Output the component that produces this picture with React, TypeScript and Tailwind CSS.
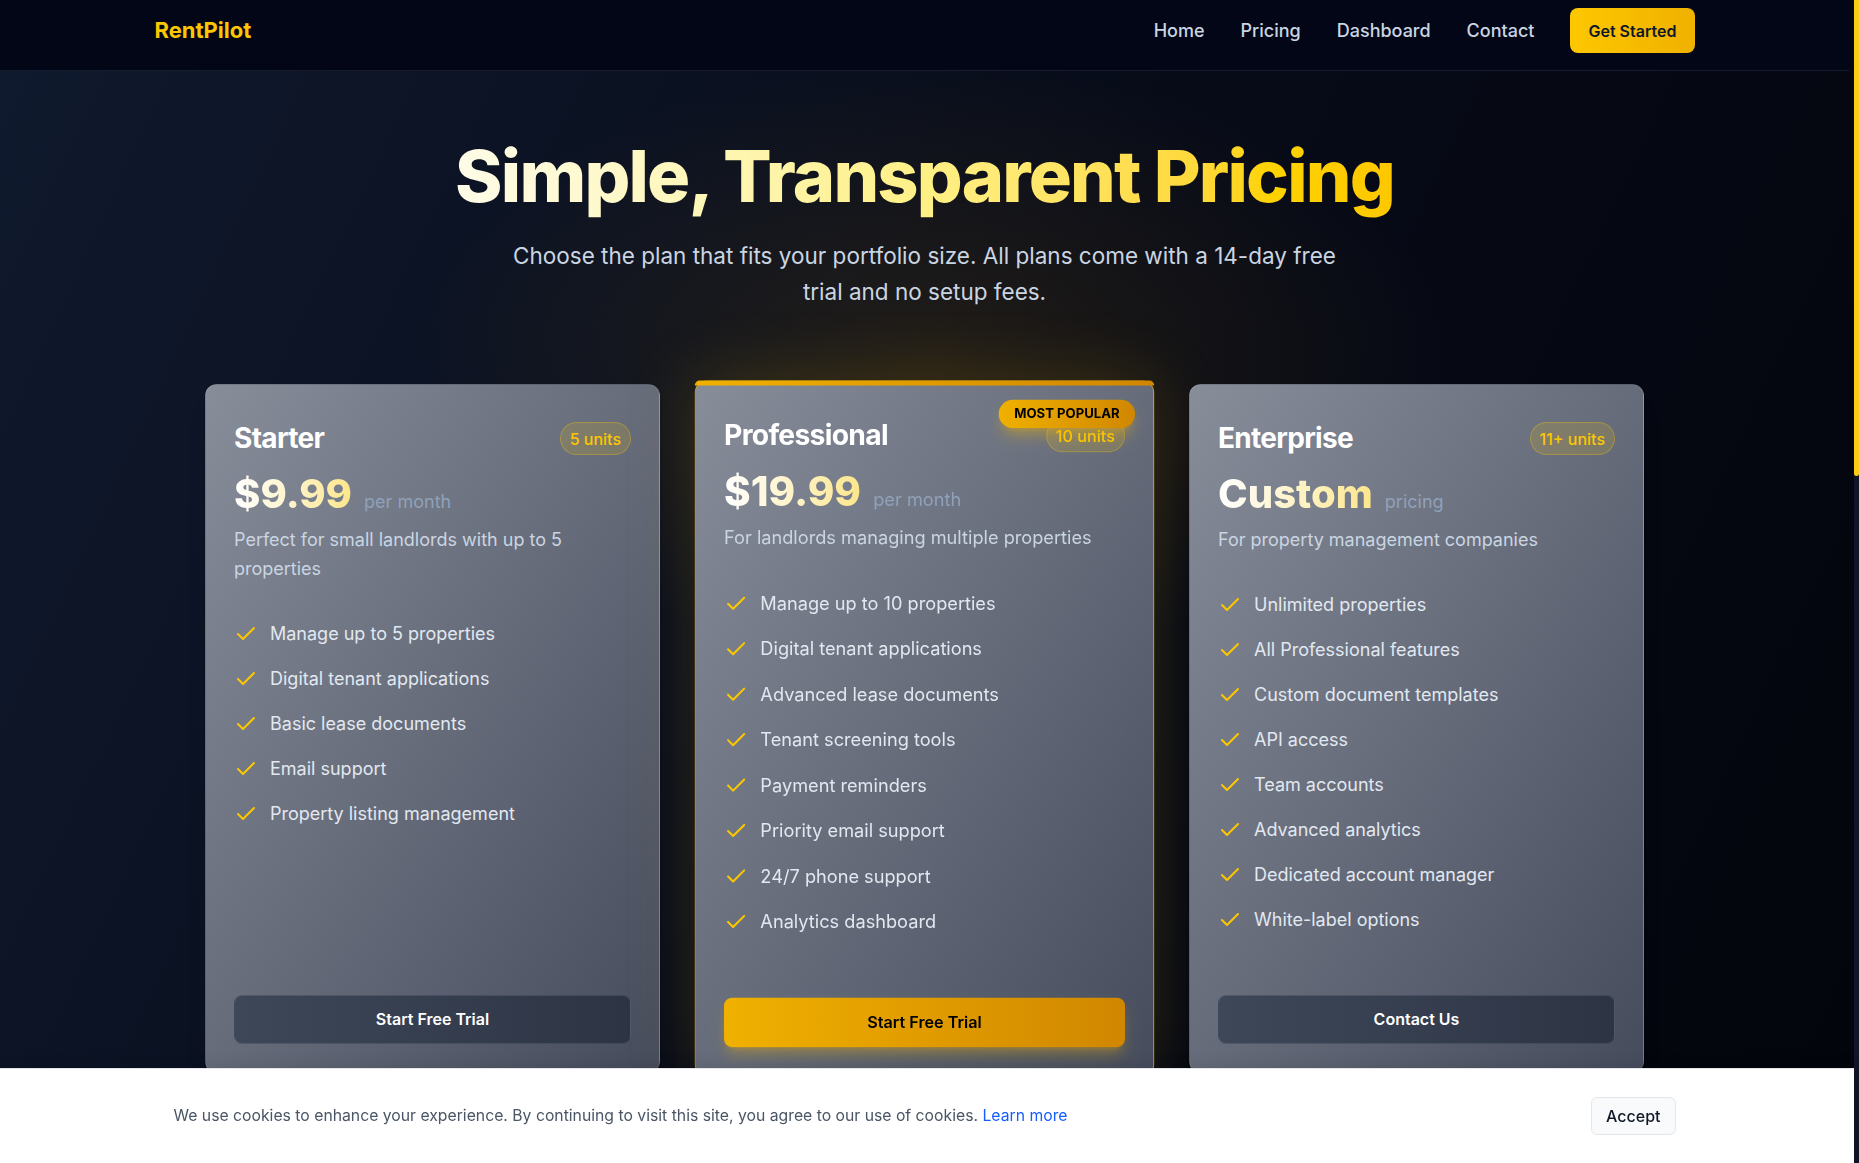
import { Check } from 'lucide-react'
import clsx from 'clsx'

type Plan = {
  name: string
  units: string
  price: string
  period: string
  description: string
  features: string[]
  cta: string
  popular?: boolean
}

const plans: Plan[] = [
  {
    name: 'Starter',
    units: '5 units',
    price: '$9.99',
    period: 'per month',
    description: 'Perfect for small landlords with up to 5 properties',
    features: [
      'Manage up to 5 properties',
      'Digital tenant applications',
      'Basic lease documents',
      'Email support',
      'Property listing management',
    ],
    cta: 'Start Free Trial',
  },
  {
    name: 'Professional',
    units: '10 units',
    price: '$19.99',
    period: 'per month',
    description: 'For landlords managing multiple properties',
    features: [
      'Manage up to 10 properties',
      'Digital tenant applications',
      'Advanced lease documents',
      'Tenant screening tools',
      'Payment reminders',
      'Priority email support',
      '24/7 phone support',
      'Analytics dashboard',
    ],
    cta: 'Start Free Trial',
    popular: true,
  },
  {
    name: 'Enterprise',
    units: '11+ units',
    price: 'Custom',
    period: 'pricing',
    description: 'For property management companies',
    features: [
      'Unlimited properties',
      'All Professional features',
      'Custom document templates',
      'API access',
      'Team accounts',
      'Advanced analytics',
      'Dedicated account manager',
      'White-label options',
    ],
    cta: 'Contact Us',
  },
]

const faqs = [
  'Can I change plans later?',
  'What happens after the free trial?',
  'Do you charge setup fees?',
  'Is my data secure?',
]

function PlanCard({ plan }: { plan: Plan }) {
  return (
    <div
      className={clsx(
        'relative flex flex-col rounded-xl border bg-gradient-to-br from-[#878d99] to-[#464c5c] px-7 pt-9 pb-7',
        plan.popular
          ? 'scale-[1.01] border-yellow-500/60 shadow-[0_0_70px_rgba(234,179,8,0.18)]'
          : 'border-white/10 shadow-xl'
      )}
    >
      {plan.popular && (
        <>
          <div className="absolute -inset-x-px -top-px h-[5px] rounded-t-xl bg-gradient-to-r from-yellow-500 to-yellow-600" />
          <span className="absolute top-[18px] right-[18px] z-10 flex h-7 w-[135px] items-center justify-center rounded-full bg-gradient-to-r from-yellow-500 to-yellow-600 text-[13px] font-bold text-black shadow-lg shadow-yellow-500/40">
            MOST POPULAR
          </span>
        </>
      )}

      <div className="flex items-center justify-between">
        <h3 className="text-[28px] leading-[35px] font-bold tracking-tight text-white">{plan.name}</h3>
        <span className="flex h-[33px] items-center rounded-full border border-yellow-400/30 bg-yellow-400/15 px-[9px] text-base font-medium text-yellow-400">
          {plan.units}
        </span>
      </div>

      <div className="mt-4 flex items-baseline gap-3">
        <span className="bg-gradient-to-r from-white to-[#fde68a] bg-clip-text text-[40px] leading-[44px] font-extrabold text-transparent">
          {plan.price}
        </span>
        <span className="text-lg text-slate-400">{plan.period}</span>
      </div>

      <p className="mt-2.5 text-lg leading-[1.6] text-slate-300">{plan.description}</p>

      <ul className="mt-9 flex flex-col gap-[17px]">
        {plan.features.map((f) => (
          <li key={f} className="flex items-center gap-3 text-lg leading-7 text-slate-200">
            <Check size={24} strokeWidth={2} className="shrink-0 text-yellow-400" />
            {f}
          </li>
        ))}
      </ul>

      <div className="mt-auto pt-[61px]">
        <button
          className={clsx(
            'h-[49px] w-full rounded-lg text-base font-semibold',
            plan.popular
              ? 'bg-gradient-to-r from-yellow-500 to-yellow-600 text-black shadow-lg shadow-yellow-500/30'
              : 'border border-white/10 bg-gradient-to-r from-[#3e4758] to-[#2d3545] text-white'
          )}
        >
          {plan.cta}
        </button>
      </div>
    </div>
  )
}

export default function App() {
  return (
    <div className="min-h-screen bg-[#020309] font-['Inter',sans-serif]">
      <div className="flex flex-col bg-[radial-gradient(ellipse_520px_300px_at_50%_360px,rgba(202,138,4,0.13),transparent),linear-gradient(115deg,#101a2e_0%,#070b18_45%,#020308_100%)] pr-[10px]">
        <nav className="sticky top-0 z-40 h-[71px] border-b border-[#161b2e] bg-[#030616] pt-2">
          <div className="mx-auto flex h-[45px] w-[1540px] items-center justify-between">
            <span className="text-[22px] font-bold text-yellow-400">RentPilot</span>
            <div className="flex items-center gap-9">
              {['Home', 'Pricing', 'Dashboard', 'Contact'].map((l) => (
                <a key={l} className="text-lg leading-7 font-medium text-slate-300">
                  {l}
                </a>
              ))}
              <button className="h-[45px] rounded-lg bg-gradient-to-r from-yellow-400 to-yellow-500 px-[18px] text-base font-semibold text-slate-900">
                Get Started
              </button>
            </div>
          </div>
        </nav>

        <section className="flex flex-col items-center pt-[60px] pb-24">
          <h1 className="bg-gradient-to-r from-yellow-50 via-yellow-200 to-yellow-400 bg-clip-text text-7xl leading-tight font-extrabold tracking-tight text-transparent">
            Simple, Transparent Pricing
          </h1>
          <p className="mt-[17px] max-w-[850px] text-center text-[22.5px] leading-[36px] text-slate-300">
            Choose the plan that fits your portfolio size. All plans come with a 14-day free trial and no setup fees.
          </p>

          <div className="mt-[74px] grid w-[1439px] grid-cols-3 gap-[37px]">
            {plans.map((p) => (
              <PlanCard key={p.name} plan={p} />
            ))}
          </div>
        </section>

        <section className="mx-auto w-[900px] py-24">
          <h2 className="text-center text-4xl font-bold text-white">Frequently Asked Questions</h2>
          <div className="mt-12 flex flex-col gap-4">
            {faqs.map((q) => (
              <div key={q} className="rounded-xl border border-white/10 bg-white/5 p-6 text-lg font-medium text-slate-200">
                {q}
              </div>
            ))}
          </div>
        </section>

        <footer className="border-t border-white/10 py-10 text-center text-sm text-slate-500">
          © 2024 RentPilot. All rights reserved.
        </footer>
      </div>

      {/* page scrollbar */}
      <div className="fixed top-0 right-0 bottom-0 z-50 w-[5px] bg-[#101527]">
        <div className="h-[476px] rounded-b-full bg-[#facc15]" />
      </div>

      <div className="fixed right-[5px] bottom-0 left-0 z-50 flex h-[95px] items-center border-t border-gray-200 bg-white pr-[5px] shadow-[0_-4px_12px_rgba(0,0,0,0.08)]">
        <div className="mx-auto flex w-[1502px] items-center justify-between">
          <p className="text-[15.75px] text-gray-600">
            We use cookies to enhance your experience. By continuing to visit this site, you agree to our use of cookies.{' '}
            <a className="text-blue-600">Learn more</a>
          </p>
          <button className="h-[38px] rounded-md border border-gray-200 bg-gray-50 px-3.5 text-base font-medium text-gray-900">
            Accept
          </button>
        </div>
      </div>
    </div>
  )
}
